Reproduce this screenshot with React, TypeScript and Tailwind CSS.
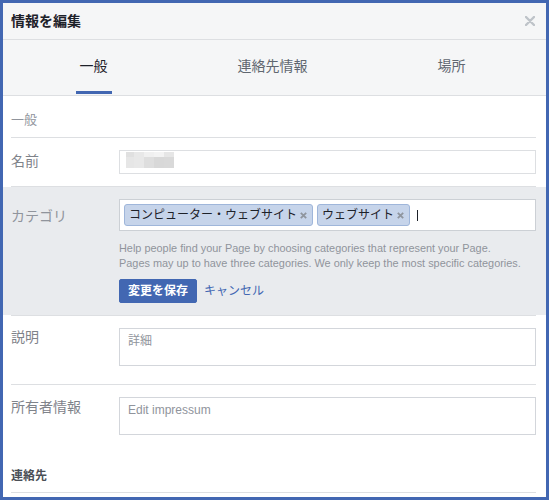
import React from "react";

const FONT = { fontFamily: '"Liberation Sans", Arial, "Noto Sans CJK JP", sans-serif' };

function CloseIcon() {
  return (
    <svg width="10" height="10" viewBox="0 0 10 10">
      <path d="M1 1 L9 9 M9 1 L1 9" stroke="#bec3c9" strokeWidth="2.4" strokeLinecap="round" />
    </svg>
  );
}

function TagX() {
  return (
    <svg width="7" height="7" viewBox="0 0 7 7">
      <path d="M0.8 0.8 L6.2 6.2 M6.2 0.8 L0.8 6.2" stroke="#8f959e" strokeWidth="1.8" />
    </svg>
  );
}

function Tag({ label }: { label: string }) {
  return (
    <div className="h-[22px] flex items-center gap-[3px] pl-[4px] pr-[5px] bg-[#c6d4ea] border border-[#9fb6da] rounded-[3px] text-[12px] text-[#1d2129] leading-none whitespace-nowrap">
      <span>{label}</span>
      <TagX />
    </div>
  );
}

export default function App() {
  const tabs = ["一般", "連絡先情報", "場所"];
  const blocksTop = ["#e0e0e0", "#e8e8e8", "#f0f0f0", "#f3f3f3", "#e6e6e6"];
  const blocksBot = ["#e6e6e6", "#e8e8e8", "#dedede", "#d8d8d8", "#d9d9d9"];
  const widths = ["w-[8px]", "w-[10px]", "w-[10px]", "w-[10px]", "w-[10px]"];
  return (
    <div style={FONT} className="w-[549px] h-[500px] border-[3px] border-[#4267b2] bg-white overflow-hidden flex flex-col">
      {/* header */}
      <div className="h-[37px] shrink-0 bg-[#f5f6f7] border-b border-[#dddfe2] flex items-center justify-between pl-[8px] pr-[11px]">
        <span className="text-[14px] font-bold text-[#1d2129]">情報を編集</span>
        <CloseIcon />
      </div>
      {/* tabs */}
      <div className="h-[56px] shrink-0 bg-[#f5f6f7] border-b border-[#dddfe2] flex pl-[1px] pr-[5px]">
        {tabs.map((t, i) => (
          <div key={t} className="flex-1 relative flex items-center justify-center pb-[2px]">
            <span className={i === 0 ? "text-[14px] text-[#1d2129]" : "text-[14px] text-[#606770]"}>{t}</span>
            {i === 0 && <div className="absolute bottom-[1px] left-1/2 -translate-x-1/2 w-[36px] h-[3px] bg-[#4267b2]" />}
          </div>
        ))}
      </div>
      {/* body */}
      <div className="pl-[8px] pr-[10px] flex flex-col">
        <div className="h-[42px] shrink-0 border-b border-[#dddfe2] pt-[15px] text-[13px] leading-[18px] text-[#90949c]">一般</div>
        {/* name */}
        <div className="h-[49px] shrink-0 border-b border-[#dddfe2] flex">
          <div className="w-[108px] shrink-0 pt-[13px] text-[14px] leading-[20px] text-[#7f838a]">名前</div>
          <div className="flex-1 pt-[12px]">
            <div className="h-[24px] border border-[#dddfe2] bg-white pl-[6px] pt-[1px] flex flex-col">
              <div className="flex">
                {blocksTop.map((c, i) => (
                  <div key={i} className={`${widths[i]} h-[5px]`} style={{ background: c }} />
                ))}
              </div>
              <div className="flex">
                {blocksBot.map((c, i) => (
                  <div key={i} className={`${widths[i]} h-[11px]`} style={{ background: c }} />
                ))}
              </div>
            </div>
          </div>
        </div>
        {/* category (editing) */}
        <div className="-ml-[8px] -mr-[10px] pl-[8px] pr-[10px] bg-[#e9ebee] flex pt-[12px] pb-[12px]">
          <div className="w-[108px] shrink-0 pt-[7px] text-[14px] leading-[20px] text-[#90949c]">カテゴリ</div>
          <div className="flex-1 flex flex-col">
            <div className="h-[32px] border border-[#ccd0d5] bg-white flex items-center gap-[4px] pl-[4px]">
              <Tag label="コンピューター・ウェブサイト" />
              <Tag label="ウェブサイト" />
              <div className="ml-[3px] w-px h-[11px] bg-[#1d2129]" />
            </div>
            <div className="mt-[10px] text-[10.9px] leading-[15px] text-[#90949c] whitespace-nowrap">
              <div>Help people find your Page by choosing categories that represent your Page.</div>
              <div>Pages may up to have three categories. We only keep the most specific categories.</div>
            </div>
            <div className="mt-[8px] flex items-center">
              <button className="w-[78px] h-[24px] bg-[#4267b2] border border-[#4267b2] rounded-[2px] text-white text-[12px] font-bold flex items-center justify-center">
                変更を保存
              </button>
              <span className="ml-[7px] text-[12px] text-[#4267b2]">キャンセル</span>
            </div>
          </div>
        </div>
        <div className="h-px shrink-0 bg-[#dddfe2]" />
        {/* description */}
        <div className="h-[69px] shrink-0 border-b border-[#dddfe2] flex">
          <div className="w-[108px] shrink-0 pt-[11px] text-[14px] leading-[20px] text-[#7f838a]">説明</div>
          <div className="flex-1 pt-[12px]">
            <div className="h-[38px] border border-[#d3d6db] bg-white px-[8px] pt-[4px] text-[12px] leading-[16px] text-[#90949c]">詳細</div>
          </div>
        </div>
        {/* impressum */}
        <div className="flex shrink-0">
          <div className="w-[108px] shrink-0 pt-[12px] text-[14px] leading-[20px] text-[#7f838a]">所有者情報</div>
          <div className="flex-1 pt-[12px]">
            <div className="h-[38px] border border-[#d3d6db] bg-white px-[8px] pt-[4px] text-[12px] leading-[16px] text-[#90949c]">Edit impressum</div>
          </div>
        </div>
        <div className="shrink-0 pt-[33px] pb-[8px] border-b border-[#dddfe2] text-[12px] leading-[16px] font-bold text-[#4b4f56]">連絡先</div>
      </div>
    </div>
  );
}
